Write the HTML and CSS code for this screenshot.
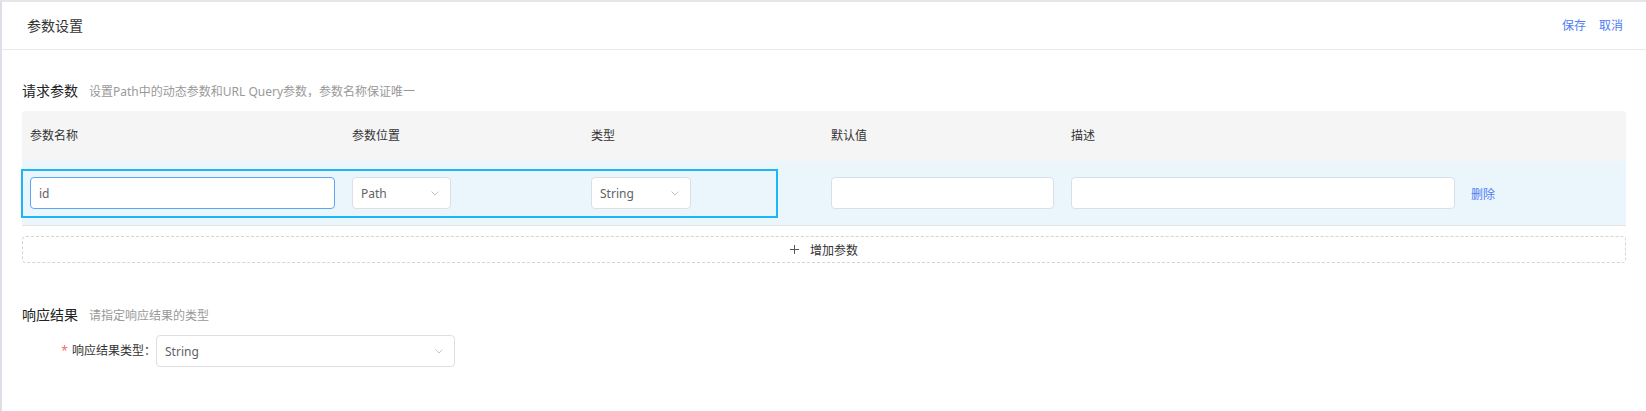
FILE: index.html
```html
<!DOCTYPE html>
<html lang="zh-CN">
<head>
<meta charset="utf-8">
<title>参数设置</title>
<link rel="stylesheet" href="styles.css">
</head>
<body>
<div class="page">
  <header class="topbar">
    <div class="title">参数设置</div>
    <div class="actions"><a class="link">保存</a><a class="link">取消</a></div>
  </header>
  <main class="content">
    <section class="sec">
      <div class="sec-head"><span class="sec-title">请求参数</span><span class="sec-desc">设置Path中的动态参数和URL Query参数，参数名称保证唯一</span></div>
      <div class="table">
        <div class="grid thead">
          <div class="cell">参数名称</div>
          <div class="cell">参数位置</div>
          <div class="cell">类型</div>
          <div class="cell">默认值</div>
          <div class="cell">描述</div>
          <div class="cell"></div>
        </div>
        <div class="grid trow">
          <div class="cell"><div class="input focus w-name">id</div></div>
          <div class="cell"><div class="input select w-pos"><span>Path</span><svg class="chev" width="8" height="5" viewBox="0 0 8 5"><path d="M0.5 0.5 L4 4 L7.5 0.5" fill="none" stroke="#c0c4cc" stroke-width="1"/></svg></div></div>
          <div class="cell"><div class="input select w-type"><span>String</span><svg class="chev" width="8" height="5" viewBox="0 0 8 5"><path d="M0.5 0.5 L4 4 L7.5 0.5" fill="none" stroke="#c0c4cc" stroke-width="1"/></svg></div></div>
          <div class="cell"><div class="input w-def"></div></div>
          <div class="cell"><div class="input w-desc"></div></div>
          <div class="cell"><a class="link del">删除</a></div>
          <div class="sel-box"></div>
        </div>
      </div>
      <div class="add-btn"><svg class="plus" width="9" height="9" viewBox="0 0 9 9"><path d="M4.5 0 V9 M0 4.5 H9" stroke="#555" stroke-width="1" fill="none"/></svg><span>增加参数</span></div>
    </section>
    <section class="sec resp">
      <div class="sec-head"><span class="sec-title">响应结果</span><span class="sec-desc">请指定响应结果的类型</span></div>
      <div class="form-row">
        <label class="label"><span class="req">*</span>响应结果类型：</label>
        <div class="input select w-resp"><span>String</span><svg class="chev" width="8" height="5" viewBox="0 0 8 5"><path d="M0.5 0.5 L4 4 L7.5 0.5" fill="none" stroke="#c0c4cc" stroke-width="1"/></svg></div>
      </div>
    </section>
  </main>
</div>
</body>
</html>
```
FILE: styles.css
```css
html, body {
  margin: 0;
  padding: 0;
  background: #fff;
}
body {
  font-family: "Noto Sans", "Noto Sans CJK SC", sans-serif;
  color: #333;
}
.page {
  height: 411px;
  box-sizing: border-box;
  border-top: 2px solid #e4e6ea;
  border-left: 2px solid #dcdfe6;
  overflow: hidden;
}
.topbar {
  height: 48px;
  box-sizing: border-box;
  border-bottom: 1px solid #e8e8e8;
  display: flex;
  align-items: center;
  justify-content: space-between;
  padding: 0 23px 0 25px;
}
.title {
  font-size: 14px;
  line-height: 20px;
  color: #333;
}
.actions {
  display: flex;
  gap: 13px;
  font-size: 12px;
  line-height: 18px;
}
.link {
  color: #4e7cf4;
  cursor: pointer;
}
.content {
  padding: 31px 20px 0 20px;
}
.sec-head {
  display: flex;
  align-items: baseline;
  height: 20px;
  line-height: 20px;
}
.sec-title {
  font-size: 14px;
  color: #222;
}
.sec-desc {
  font-size: 12px;
  color: #999;
  margin-left: 11px;
}
.table {
  margin-top: 10px;
}
.grid {
  display: grid;
  grid-template-columns: 322px 239px 240px 240px 400px 1fr;
  align-items: center;
}
.thead {
  height: 50px;
  background: #f5f5f5;
  border-radius: 4px 4px 0 0;
  font-size: 12px;
  line-height: 18px;
  color: #333;
}
.cell {
  padding: 0 8px;
}
.trow {
  position: relative;
  height: 64px;
  background: #ebf5fc;
  border-bottom: 1px solid #e2e4e6;
}
.input {
  height: 32px;
  box-sizing: border-box;
  border: 1px solid #dcdfe6;
  border-radius: 4px;
  background: #fff;
  font-size: 12px;
  color: #606266;
  padding: 0 8px;
  display: flex;
  align-items: center;
}
.input.focus {
  border-color: #5aa7f5;
}
.select {
  justify-content: space-between;
  padding-right: 11px;
}
.chev {
  display: block;
}
.w-name { width: 305px; }
.w-pos { width: 99px; }
.w-type { width: 100px; }
.w-def { width: 223px; }
.w-desc { width: 384px; }
.w-resp { width: 299px; }
.del {
  font-size: 12px;
}
.sel-box {
  position: absolute;
  left: -1px;
  top: 8px;
  width: 757px;
  height: 49px;
  box-sizing: border-box;
  border: 2px solid #1cb6f6;
  pointer-events: none;
}
.add-btn {
  margin-top: 10px;
  height: 27px;
  box-sizing: border-box;
  border: 1px dashed #d5d5d5;
  border-radius: 4px;
  display: flex;
  align-items: center;
  justify-content: center;
  gap: 11px;
  font-size: 12px;
  color: #333;
}
.plus {
  display: block;
}
.resp {
  margin-top: 42px;
}
.form-row {
  margin-top: 10px;
  display: flex;
  align-items: center;
}
.label {
  width: 134px;
  text-align: right;
  font-size: 12px;
  line-height: 18px;
  color: #333;
}
.req {
  color: #f56c6c;
  margin-right: 4px;
}
```
